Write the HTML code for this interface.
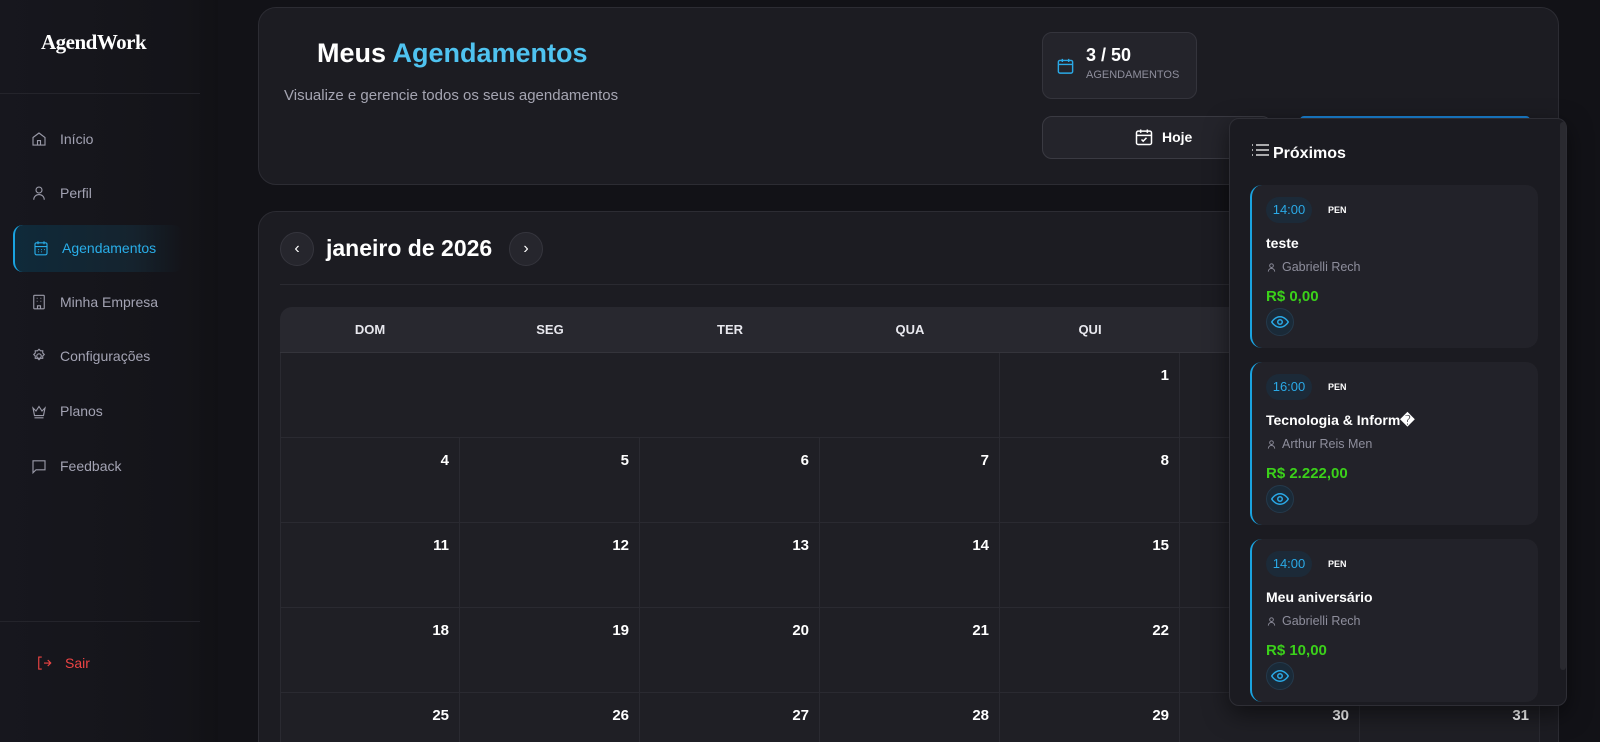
<!DOCTYPE html>
<html><head><meta charset="utf-8"><style>
*{box-sizing:border-box;margin:0;padding:0}
html,body{width:1600px;height:742px;overflow:hidden}
body{background:#121217;font-family:"Liberation Sans",sans-serif;color:#fff}
#root{position:relative;width:1600px;height:742px;overflow:hidden}
.abs{position:absolute}
.side{left:0;top:0;width:218px;height:742px;background:linear-gradient(90deg,#17171e,#141419 85%,#111115)}
.nav{position:absolute;left:30px;display:flex;align-items:center;gap:12px;font-size:14px;color:#a3a3b3}
.nav svg{width:18px;height:18px;stroke:#9a9aa8;fill:none;stroke-width:1.5}
.card{background:#1c1c22;border:1px solid #2c2c33;border-radius:18px}
.cell{position:absolute;border-right:1px solid #2a2a31;border-bottom:1px solid #2a2a31;text-align:right;padding:14px 10px 0 0;font-size:15px;font-weight:bold}
.hd{position:absolute;top:307px;height:46px;line-height:46px;text-align:center;font-size:13px;font-weight:bold;color:#e8e8ee}
.ev{position:absolute;left:1250px;width:288px;height:163px;background:#222229;border-radius:12px;border-left:2px solid #1aa3e0}
.tm{position:absolute;left:14px;top:12px;width:46px;height:26px;border-radius:13px;background:#1c2a38;color:#2aa9e6;font-size:13px;text-align:center;line-height:26px}
.pen{position:absolute;left:76px;top:20px;font-size:9px;font-weight:bold}
.tt{position:absolute;left:14px;top:50px;font-size:14px;font-weight:bold}
.pp{position:absolute;left:14px;top:75px;font-size:12.5px;color:#8e8e9c;display:flex;gap:5px;align-items:center}
.pr{position:absolute;left:14px;top:103px;font-size:15px;font-weight:bold;color:#3bd11a}
.eye{position:absolute;left:14px;top:123px;width:28px;height:28px;border-radius:14px;background:#1a2a38;border:1px solid #24394b;display:flex;align-items:center;justify-content:center}
</style></head><body><div id="root">
<div class="abs side"></div>
<div class="abs" style="left:41px;top:30px;font-family:'Liberation Serif',serif;font-weight:bold;font-size:21px;letter-spacing:-0.5px">AgendWork</div>
<div class="abs" style="left:0;top:93px;width:200px;height:1px;background:#24242b"></div>
<div class="nav" style="top:130px"><svg viewBox="0 0 24 24"><path d="M4 10l8-6 8 6v10H4z M10 20v-6h4v6"/></svg>Início</div>
<div class="nav" style="top:184px"><svg viewBox="0 0 24 24"><circle cx="12" cy="8" r="4"/><path d="M5 21c0-4 3-7 7-7s7 3 7 7"/></svg>Perfil</div>
<div class="abs" style="left:13px;top:225px;width:170px;height:47px;border-left:2px solid #1aa3e0;border-radius:10px;background:linear-gradient(90deg,#0f2a3a,#15232e 70%,rgba(20,20,26,0))"></div>
<div class="nav" style="top:239px;left:32px;color:#29aee9"><svg viewBox="0 0 24 24" style="stroke:#29aee9"><rect x="4" y="5" width="16" height="16" rx="2"/><path d="M4 10h16M8 3v4M16 3v4M8 14h1M12 14h1M16 14h1M8 17h1M12 17h1"/></svg>Agendamentos</div>
<div class="nav" style="top:293px"><svg viewBox="0 0 24 24"><rect x="5" y="3" width="14" height="18" rx="1"/><path d="M9 7h1M14 7h1M9 11h1M14 11h1M10 21v-4h4v4"/></svg>Minha Empresa</div>
<div class="nav" style="top:347px"><svg viewBox="0 0 24 24"><circle cx="12" cy="12" r="3"/><path d="M12 3l2 2h3v3l2 2-2 2v3h-3l-2 2-2-2H7v-3l-2-2 2-2V5h3z"/></svg>Configurações</div>
<div class="nav" style="top:402px"><svg viewBox="0 0 24 24"><path d="M4 8l4 4 4-6 4 6 4-4-2 10H6z M6 21h12"/></svg>Planos</div>
<div class="nav" style="top:457px"><svg viewBox="0 0 24 24"><path d="M4 5h16v12H8l-4 4z"/></svg>Feedback</div>
<div class="abs" style="left:0;top:621px;width:200px;height:1px;background:#24242b"></div>
<div class="nav" style="top:654px;left:35px;color:#ef4444"><svg viewBox="0 0 24 24" style="stroke:#ef4444"><path d="M9 4H5v16h4M12 12h9M17 8l4 4-4 4"/></svg>Sair</div>

<div class="abs card" style="left:258px;top:7px;width:1301px;height:178px"></div>
<div class="abs" style="left:317px;top:38px;font-size:27px;font-weight:bold">Meus <span style="color:#4fc3f0">Agendamentos</span></div>
<div class="abs" style="left:284px;top:87px;font-size:15px;color:#a5a5b2">Visualize e gerencie todos os seus agendamentos</div>
<div class="abs" style="left:1042px;top:32px;width:155px;height:67px;background:#24242b;border:1px solid #34343c;border-radius:10px"></div>
<svg class="abs" style="left:1056px;top:56px" width="19" height="20" viewBox="0 0 24 24" fill="none" stroke="#2aa9e6" stroke-width="1.8"><rect x="3" y="5" width="18" height="16" rx="2"/><path d="M3 10h18M8 3v4M16 3v4"/></svg>
<div class="abs" style="left:1086px;top:45px;font-size:18px;font-weight:bold">3 / 50</div>
<div class="abs" style="left:1086px;top:69px;font-size:11px;color:#8e8e9c">AGENDAMENTOS</div>
<div class="abs" style="left:1042px;top:116px;width:230px;height:43px;background:#24242b;border:1px solid #3a3a42;border-radius:10px"></div>
<svg class="abs" style="left:1134px;top:127px" width="20" height="20" viewBox="0 0 24 24" fill="none" stroke="#fff" stroke-width="1.8"><rect x="3" y="5" width="18" height="16" rx="2"/><path d="M3 10h18M8 3v4M16 3v4M9 15l2 2 4-4"/></svg>
<div class="abs" style="left:1162px;top:129px;font-size:14px;font-weight:bold">Hoje</div>
<div class="abs" style="left:1300px;top:116px;width:230px;height:4px;background:#1a7fd0;border-radius:10px 10px 0 0"></div>

<div class="abs card" style="left:258px;top:211px;width:1301px;height:560px;border-radius:18px"></div>
<div class="abs" style="left:280px;top:232px;width:34px;height:34px;border-radius:17px;background:#26262d;border:1px solid #35353d;text-align:center;line-height:32px;font-size:16px">‹</div>
<div class="abs" style="left:326px;top:235px;font-size:23px;font-weight:bold">janeiro de 2026</div>
<div class="abs" style="left:509px;top:232px;width:34px;height:34px;border-radius:17px;background:#26262d;border:1px solid #35353d;text-align:center;line-height:32px;font-size:16px">›</div>
<div class="abs" style="left:280px;top:284px;width:1260px;height:1px;background:#2a2a31"></div>
<div class="abs" style="left:280px;top:307px;width:1260px;height:46px;background:#28282f;border-radius:12px 12px 0 0;border-bottom:1px solid #34343b"></div>
<div class="hd" style="left:280px;width:180px">DOM</div><div class="hd" style="left:460px;width:180px">SEG</div><div class="hd" style="left:640px;width:180px">TER</div><div class="hd" style="left:820px;width:180px">QUA</div><div class="hd" style="left:1000px;width:180px">QUI</div><div class="hd" style="left:1180px;width:180px">SEX</div><div class="hd" style="left:1360px;width:180px">SAB</div>
<div class="abs" style="left:280px;top:353px;width:1260px;height:389px;background:#1f1f25"></div>
<div class="cell" style="left:280px;top:353px;width:720px;height:85px;border-left:1px solid #2a2a31"></div>
<div class="cell" style="left:1000px;top:353px;width:180px;height:85px">1</div>
<div class="cell" style="left:1180px;top:353px;width:180px;height:85px">2</div>
<div class="cell" style="left:1360px;top:353px;width:180px;height:85px">3</div>
<div class="cell" style="left:280px;top:438px;width:180px;height:85px;border-left:1px solid #2a2a31">4</div><div class="cell" style="left:460px;top:438px;width:180px;height:85px">5</div><div class="cell" style="left:640px;top:438px;width:180px;height:85px">6</div><div class="cell" style="left:820px;top:438px;width:180px;height:85px">7</div><div class="cell" style="left:1000px;top:438px;width:180px;height:85px">8</div><div class="cell" style="left:1180px;top:438px;width:180px;height:85px">9</div><div class="cell" style="left:1360px;top:438px;width:180px;height:85px">10</div>
<div class="cell" style="left:280px;top:523px;width:180px;height:85px;border-left:1px solid #2a2a31">11</div><div class="cell" style="left:460px;top:523px;width:180px;height:85px">12</div><div class="cell" style="left:640px;top:523px;width:180px;height:85px">13</div><div class="cell" style="left:820px;top:523px;width:180px;height:85px">14</div><div class="cell" style="left:1000px;top:523px;width:180px;height:85px">15</div><div class="cell" style="left:1180px;top:523px;width:180px;height:85px">16</div><div class="cell" style="left:1360px;top:523px;width:180px;height:85px">17</div>
<div class="cell" style="left:280px;top:608px;width:180px;height:85px;border-left:1px solid #2a2a31">18</div><div class="cell" style="left:460px;top:608px;width:180px;height:85px">19</div><div class="cell" style="left:640px;top:608px;width:180px;height:85px">20</div><div class="cell" style="left:820px;top:608px;width:180px;height:85px">21</div><div class="cell" style="left:1000px;top:608px;width:180px;height:85px">22</div><div class="cell" style="left:1180px;top:608px;width:180px;height:85px">23</div><div class="cell" style="left:1360px;top:608px;width:180px;height:85px">24</div>
<div class="cell" style="left:280px;top:693px;width:180px;height:60px;border-left:1px solid #2a2a31">25</div><div class="cell" style="left:460px;top:693px;width:180px;height:60px">26</div><div class="cell" style="left:640px;top:693px;width:180px;height:60px">27</div><div class="cell" style="left:820px;top:693px;width:180px;height:60px">28</div><div class="cell" style="left:1000px;top:693px;width:180px;height:60px">29</div><div class="cell" style="left:1180px;top:693px;width:180px;height:60px">30</div><div class="cell" style="left:1360px;top:693px;width:180px;height:60px">31</div>

<div class="abs" style="left:1229px;top:118px;width:338px;height:588px;background:#1b1b21;border:1px solid #2e2e35;border-radius:10px;box-shadow:0 8px 24px rgba(0,0,0,.5)"></div>
<div class="abs" style="left:1560px;top:122px;width:6px;height:548px;background:#2a2a30;border-radius:3px"></div>
<svg class="abs" style="left:1252px;top:143px" width="17" height="15" viewBox="0 0 17 15" stroke="#fff" stroke-width="1.3"><path d="M0 2h1M4 2h13M0 7h1M4 7h13M0 12h1M4 12h13"/></svg>
<div class="abs" style="left:1273px;top:145px;font-size:16px;font-weight:bold">Próximos</div>

<div class="ev" style="top:185px"><div class="tm">14:00</div><div class="pen">PEN</div><div class="tt">teste</div><div class="pp"><svg width="11" height="11" viewBox="0 0 24 24" fill="none" stroke="#8e8e9c" stroke-width="2"><circle cx="12" cy="8" r="4"/><path d="M5 21c0-4 3-7 7-7s7 3 7 7"/></svg>Gabrielli Rech</div><div class="pr">R$ 0,00</div><div class="eye"><svg width="18" height="14" viewBox="0 0 24 18" fill="none" stroke="#2aa9e6" stroke-width="2"><path d="M1 9s4-7 11-7 11 7 11 7-4 7-11 7S1 9 1 9z"/><circle cx="12" cy="9" r="3"/></svg></div></div>
<div class="ev" style="top:362px"><div class="tm">16:00</div><div class="pen">PEN</div><div class="tt">Tecnologia &amp; Inform�</div><div class="pp"><svg width="11" height="11" viewBox="0 0 24 24" fill="none" stroke="#8e8e9c" stroke-width="2"><circle cx="12" cy="8" r="4"/><path d="M5 21c0-4 3-7 7-7s7 3 7 7"/></svg>Arthur Reis Men</div><div class="pr">R$ 2.222,00</div><div class="eye"><svg width="18" height="14" viewBox="0 0 24 18" fill="none" stroke="#2aa9e6" stroke-width="2"><path d="M1 9s4-7 11-7 11 7 11 7-4 7-11 7S1 9 1 9z"/><circle cx="12" cy="9" r="3"/></svg></div></div>
<div class="ev" style="top:539px"><div class="tm">14:00</div><div class="pen">PEN</div><div class="tt">Meu aniversário</div><div class="pp"><svg width="11" height="11" viewBox="0 0 24 24" fill="none" stroke="#8e8e9c" stroke-width="2"><circle cx="12" cy="8" r="4"/><path d="M5 21c0-4 3-7 7-7s7 3 7 7"/></svg>Gabrielli Rech</div><div class="pr">R$ 10,00</div><div class="eye"><svg width="18" height="14" viewBox="0 0 24 18" fill="none" stroke="#2aa9e6" stroke-width="2"><path d="M1 9s4-7 11-7 11 7 11 7-4 7-11 7S1 9 1 9z"/><circle cx="12" cy="9" r="3"/></svg></div></div>
</div></body></html>
